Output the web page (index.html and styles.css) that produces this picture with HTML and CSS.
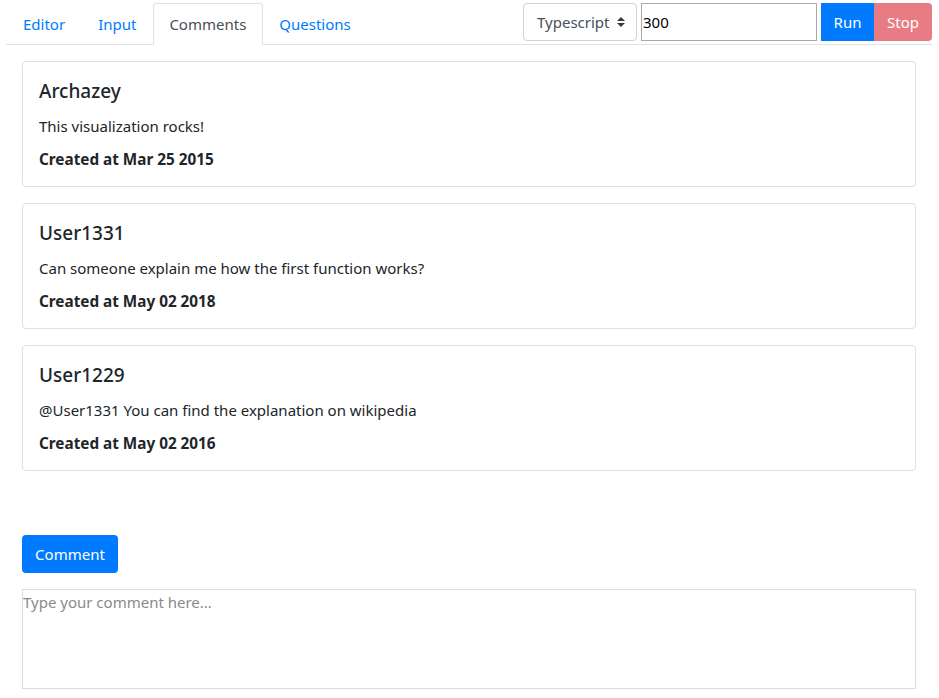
FILE: index.html
```html
<!DOCTYPE html>
<html lang="en">
<head>
<meta charset="utf-8">
<title>Comments</title>
<link rel="stylesheet" href="styles.css">
</head>
<body>
<div class="topbar">
  <ul class="tabs">
    <li class="tab">Editor</li>
    <li class="tab">Input</li>
    <li class="tab active">Comments</li>
    <li class="tab">Questions</li>
  </ul>
  <div class="controls">
    <div class="select">
      <span>Typescript</span>
      <svg class="caret" width="8" height="10" viewBox="0 0 8 10"><path d="M4 0 L8 4 H0 Z M0 6 H8 L4 10 Z" fill="#343a40"/></svg>
    </div>
    <input class="num" type="text" value="300">
    <div class="btn-group">
      <button class="btn run">Run</button>
      <button class="btn stop">Stop</button>
    </div>
  </div>
</div>
<main class="content">
  <div class="card">
    <h5 class="card-title">Archazey</h5>
    <p class="card-text">This visualization rocks!</p>
    <p class="card-date">Created at Mar 25 2015</p>
  </div>
  <div class="card">
    <h5 class="card-title">User1331</h5>
    <p class="card-text">Can someone explain me how the first function works?</p>
    <p class="card-date">Created at May 02 2018</p>
  </div>
  <div class="card">
    <h5 class="card-title">User1229</h5>
    <p class="card-text">@User1331 You can find the explanation on wikipedia</p>
    <p class="card-date">Created at May 02 2016</p>
  </div>
  <button class="btn comment">Comment</button>
  <textarea class="box" placeholder="Type your comment here..."></textarea>
</main>
</body>
</html>
```
FILE: styles.css
```css
* { box-sizing: border-box; }
body {
  margin: 0;
  font-family: "Noto Sans", "Open Sans", sans-serif;
  font-size: 15px;
  color: #212529;
  background: #fff;
}
.topbar {
  display: flex;
  justify-content: space-between;
  align-items: flex-start;
  margin: 3px 7px 0 6px;
  border-bottom: 1px solid #dee2e6;
}
.tabs {
  display: flex;
  list-style: none;
  margin: 0 0 -1px 0;
  padding: 0;
}
.tab {
  padding: 0 15.5px;
  height: 42px;
  line-height: 40px;
  color: #007bff;
  border: 1px solid transparent;
  border-radius: 4px 4px 0 0;
}
.tab:first-child { padding-left: 16px; }
.tab.active {
  color: #495057;
  border-color: #dee2e6 #dee2e6 #fff;
  background: #fff;
}
.controls {
  display: flex;
  align-items: center;
}
.select {
  width: 114px;
  height: 38px;
  border: 1px solid #ced4da;
  border-radius: 4px;
  display: flex;
  align-items: center;
  justify-content: space-between;
  padding: 0 11px 0 13px;
  color: #495057;
  margin-right: 4px;
}
.num {
  width: 176px;
  height: 38px;
  border: 1px solid #a9a9a9;
  font: inherit;
  font-size: 15px;
  padding: 0 1px;
  color: #000;
  margin-right: 4px;
  outline: none;
}
.btn-group { display: flex; }
.btn {
  font: inherit;
  border: 0;
  height: 38px;
  color: #fff;
  padding: 0 12px;
  cursor: pointer;
}
.run {
  background: #007bff;
  width: 53px;
}
.stop {
  background: #e97b84;
  width: 58px;
  border-radius: 0 4px 4px 0;
}
.content {
  display: flex;
  flex-direction: column;
  align-items: flex-start;
  padding: 16px 23px 0 22px;
}
.card {
  width: 100%;
  border: 1px solid #dfdfdf;
  border-radius: 4px;
  padding: 15px 16px 2px;
  margin-bottom: 16px;
  height: 126px;
}
.card-title {
  margin: 0 0 9px;
  font-size: 19px;
  font-weight: 500;
  line-height: 28px;
}
.card-text {
  margin: 0 0 9px;
  line-height: 24px;
}
.card-date {
  margin: 0;
  font-weight: 700;
  font-size: 15.3px;
  line-height: 24px;
}
.comment {
  margin-top: 48px;
  width: 96px;
  border-radius: 4px;
  background: #007bff;
}
.box {
  margin-top: 16px;
  width: 100%;
  height: 100px;
  border: 1px solid #dcdcdc;
  font: inherit;
  padding: 2px 0 0;
  resize: none;
  outline: none;
}
.box::placeholder { color: #8a8a8a; }
```
